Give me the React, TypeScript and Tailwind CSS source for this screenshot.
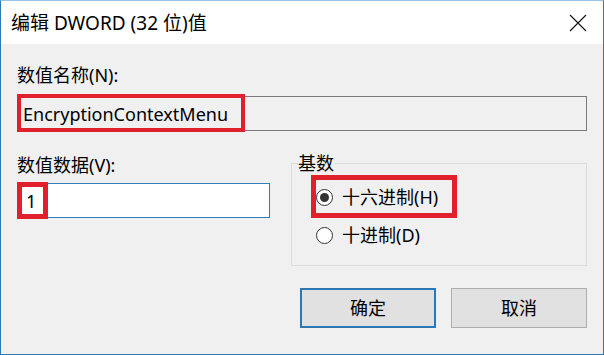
import React from "react";

const font = { fontFamily: '"Noto Sans", "Noto Sans CJK SC", sans-serif' };

function Radio({ checked }: { checked?: boolean }) {
  return (
    <span className="w-[17px] h-[17px] rounded-full border border-[#333333] bg-white flex items-center justify-center shrink-0">
      {checked && <span className="w-[9px] h-[9px] rounded-full bg-[#333333]" />}
    </span>
  );
}

export default function App() {
  return (
    <div
      className="w-[604px] h-[355px] bg-[#f0f0f0] border border-[#2b79b5] border-t-[#9cc3e5] flex flex-col text-[18px] text-black overflow-hidden"
      style={font}
    >
      <div className="h-[43px] bg-white flex items-center justify-between pl-[10px] pr-[16px] shrink-0">
        <span className="leading-6 text-[19px]">编辑 DWORD (32 位)值</span>
        <svg width="18" height="18" viewBox="0 0 18 18" className="mt-[1px]">
          <path d="M1 1 L17 17 M17 1 L1 17" stroke="#111" strokeWidth="1.1" fill="none" />
        </svg>
      </div>
      <div className="flex flex-col pl-[16px] pr-[16px] pt-[19px]">
        <div className="leading-6">数值名称(N):</div>
        <div className="relative mt-[9px] h-[35px] border border-[#7a7a7a] bg-[#f0f0f0] flex items-center pl-[5px]">
          <span className="leading-6">EncryptionContextMenu</span>
          <div className="absolute -left-px -top-[3px] w-[228px] h-[38px] border-4 border-[#e0202b]" />
        </div>
        <div className="flex mt-[22px] gap-[21px]">
          <div className="w-[253px] flex flex-col">
            <div className="leading-6">数值数据(V):</div>
            <div className="relative mt-[6px] h-[35px] border border-[#2f7fb8] bg-white flex items-center pl-[8px]">
              <span className="leading-6">1</span>
              <div className="absolute -left-px -top-[2px] w-[31px] h-[37px] border-[5px] border-[#e0202b]" />
            </div>
          </div>
          <fieldset className="w-[296px] -mt-[2px] border border-[#dcdcdc] pl-[6px] pt-[3px] pb-[11px] min-w-0">
            <legend className="leading-6">基数</legend>
            <div className="relative flex items-center h-[38px] pl-[18px] gap-[9px]">
              <Radio checked />
              <span className="leading-6">十六进制(H)</span>
              <div className="absolute left-[13px] top-[-3px] w-[146px] h-[43px] border-[5px] border-[#e0202b]" />
            </div>
            <div className="flex items-center h-[38px] pl-[18px] gap-[9px]">
              <Radio />
              <span className="leading-6">十进制(D)</span>
            </div>
          </fieldset>
        </div>
        <div className="flex justify-end gap-[15px] mt-[22px]">
          <button className="w-[136px] h-[40px] border-2 border-[#2a78b5] bg-[#e1e1e1] leading-6">确定</button>
          <button className="w-[136px] h-[40px] border border-[#adadad] bg-[#e1e1e1] leading-6">取消</button>
        </div>
      </div>
    </div>
  );
}
